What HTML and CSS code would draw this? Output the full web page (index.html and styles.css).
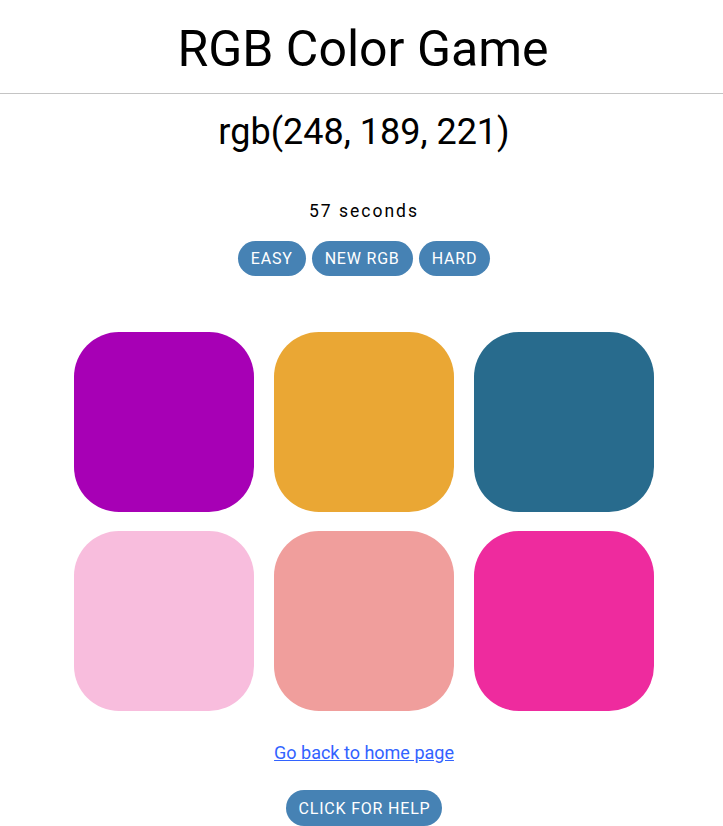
FILE: index.html
```html
<!DOCTYPE html>
<html>
<head>
<meta charset="utf-8">
<link rel="stylesheet" href="styles.css">
</head>
<body>
<header class="header">
  <h1 class="title">RGB Color Game</h1>
</header>
<main class="main">
  <h2 class="target">rgb(248, 189, 221)</h2>
  <p class="timer">57 seconds</p>
  <div class="controls">
    <button class="btn">EASY</button>
    <button class="btn">NEW RGB</button>
    <button class="btn">HARD</button>
  </div>
  <div class="grid">
    <div class="square sq1"></div>
    <div class="square sq2"></div>
    <div class="square sq3"></div>
    <div class="square sq4"></div>
    <div class="square sq5"></div>
    <div class="square sq6"></div>
  </div>
  <a class="home-link" href="#">Go back to home page</a>
  <button class="btn help">CLICK FOR HELP</button>
</main>
</body>
</html>
```

FILE: styles.css
```css
html, body {
  margin: 0;
  padding: 0;
  background: #fff;
  font-family: Roboto, "Liberation Sans", sans-serif;
  color: #000;
}
.header {
  border-bottom: 1px solid #c4c4c4;
  height: 93px;
  display: flex;
  justify-content: center;
  align-items: center;
}
.title {
  margin: 0;
  font-weight: 400;
  font-size: 50px;
  line-height: 1;
  padding-top: 4px;
  padding-left: 3px;
}
.main {
  display: flex;
  flex-direction: column;
  align-items: center;
}
.target {
  margin: 14px 0 0;
  font-weight: 400;
  font-size: 36px;
  line-height: 48px;
  padding-left: 5px;
}
.timer {
  margin: 45px 0 0;
  font-size: 17.5px;
  line-height: 20px;
  letter-spacing: 2px;
  padding-left: 5px;
}
.controls {
  margin-top: 20px;
  display: flex;
  gap: 6px;
  padding-left: 5px;
}
.btn {
  background: #4682b4;
  color: #fff;
  border: none;
  border-radius: 18px;
  height: 35px;
  padding: 0 13px;
  font-family: Roboto, "Liberation Sans", sans-serif;
  font-size: 16px;
  letter-spacing: 0.8px;
  font-weight: 400;
}
.grid {
  margin-top: 56px;
  display: grid;
  grid-template-columns: repeat(3, 180px);
  gap: 19px 20px;
  padding-left: 5px;
}
.square {
  width: 180px;
  height: 180px;
  border-radius: 45px;
}
.sq1 { background: #a700b5; }
.sq2 { background: #eaa734; }
.sq3 { background: #286b8d; }
.sq4 { background: #f8bddd; }
.sq5 { background: #f09e9c; }
.sq6 { background: #ee2b9e; }
.home-link {
  margin-top: 32px;
  font-size: 18px;
  line-height: 20px;
  color: #3263ff;
  text-decoration: underline;
  padding-left: 5px;
}
.help {
  margin-top: 27px;
  font-size: 16px;
  height: 36px;
  padding: 0 12px 0 13px;
  margin-left: 5px;
}
```
